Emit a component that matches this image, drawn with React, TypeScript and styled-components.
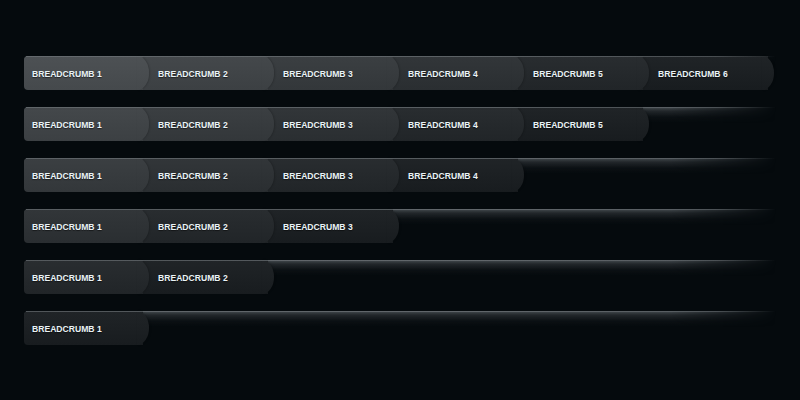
import React from 'react';
import styled, { createGlobalStyle } from 'styled-components';

const GlobalStyle = createGlobalStyle`
  html, body {
    margin: 0;
    padding: 0;
    background: #050a0d;
  }
  body {
    width: 800px;
    height: 400px;
    overflow: hidden;
    font-family: 'Liberation Sans', Arial, sans-serif;
  }
`;

const Page = styled.div`
  display: flex;
  flex-direction: column;
  gap: 17px;
  padding: 56px 0 0 24px;
`;

const Bar = styled.ul`
  position: relative;
  isolation: isolate;
  display: flex;
  width: 752px;
  height: 34px;
  margin: 0;
  padding: 0;
  list-style: none;

  &::before {
    content: '';
    position: absolute;
    inset: 0;
    z-index: 0;
    border-radius: 4px 0 0 0;
    background: linear-gradient(
      to bottom,
      rgba(92, 98, 103, 0.75) 0,
      rgba(58, 63, 67, 0.55) 4px,
      rgba(30, 35, 39, 0.25) 10px,
      rgba(5, 10, 13, 0) 16px
    );
    -webkit-mask-image: linear-gradient(to right, #000 0, #000 86%, transparent 100%);
    mask-image: linear-gradient(to right, #000 0, #000 86%, transparent 100%);
  }

  &::after {
    content: '';
    position: absolute;
    left: 2px;
    right: 0;
    top: 0;
    height: 1px;
    z-index: 20;
    background: linear-gradient(
      to right,
      rgba(120, 126, 130, 0.55) 0,
      rgba(110, 116, 120, 0.7) 60%,
      rgba(100, 106, 110, 0.6) 92%,
      rgba(100, 106, 110, 0) 100%
    );
  }
`;

const shade = (d: number) => {
  const v = 0x1c + d * 9;
  const top = `rgb(${v + 4}, ${v + 8}, ${v + 11})`;
  const bottom = `rgb(${v - 4}, ${v}, ${v + 3})`;
  return `linear-gradient(to bottom, ${top}, ${bottom})`;
};

const Crumb = styled.li<{ $d: number; $z: number }>`
  position: relative;
  z-index: ${p => p.$z};
  flex: 0 0 131px;
  box-sizing: border-box;
  height: 34px;
  margin-left: -6px;
  padding: 1px 0 0 15px;
  display: flex;
  align-items: center;
  background: ${p => shade(p.$d)};
  background-size: calc(100% - 6px) 100%;
  background-repeat: no-repeat;

  &:first-child {
    flex-basis: 125px;
    margin-left: 0;
    padding-left: 8px;
    border-radius: 4px 0 0 4px;
  }

  &::after {
    content: '';
    position: absolute;
    top: 0;
    right: 0;
    width: 12px;
    height: 34px;
    border-radius: 0 100% 100% 0 / 0 50% 50% 0;
    background: ${p => shade(p.$d)};
    box-shadow: 1px 0 2px rgba(0, 0, 0, 0.2);
    z-index: -1;
  }
`;

const Label = styled.a`
  position: relative;
  z-index: 2;
  color: #eaf3f6;
  font-size: 8.6px;
  font-weight: 700;
  text-transform: uppercase;
  text-decoration: none;
  text-shadow: 0 1px 1px rgba(0, 0, 0, 0.5);
  white-space: nowrap;
`;

const counts = [6, 5, 4, 3, 2, 1];

export default function App() {
  return (
    <>
      <GlobalStyle />
      <Page>
        {counts.map(n => (
          <Bar key={n}>
            {Array.from({ length: n }, (_, i) => (
              <Crumb key={i} $d={n - 1 - i} $z={10 - i}>
                <Label href="#">Breadcrumb {i + 1}</Label>
              </Crumb>
            ))}
          </Bar>
        ))}
      </Page>
    </>
  );
}
